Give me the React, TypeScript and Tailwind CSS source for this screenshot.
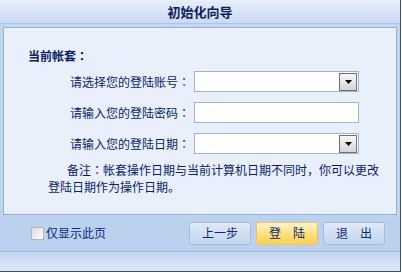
import React from "react";

const font = { fontFamily: '"Noto Sans CJK SC", "Noto Sans", sans-serif' };

function C() {
  return (
    <span
      className="inline-block w-[12px] text-center overflow-hidden align-top"
      style={{ fontFamily: '"Noto Sans CJK TC", sans-serif' }}
    >
      ：
    </span>
  );
}

function DropBtn() {
  return (
    <div className="w-[18px] h-[18px] mr-[1px] border border-[#6f6f6f] bg-gradient-to-b from-[#f7f7f7] to-[#d6d6d6] flex items-center justify-center">
      <svg width="7" height="4" viewBox="0 0 7 4">
        <path d="M0 0 H7 L3.5 4 Z" fill="#000" />
      </svg>
    </div>
  );
}

function Row({ label, select }: { label: string; select?: boolean }) {
  return (
    <div className="flex items-center">
      <div className="w-[162px] text-right text-[12px] leading-[16px] text-[#0a1d6b]">
        {label}
        <C />
      </div>
      <div className="ml-[4px] w-[165px] h-[21px] border border-[#9fb4d4] bg-white flex items-center justify-end">
        {select ? <DropBtn /> : null}
      </div>
    </div>
  );
}

function Btn({ children, primary }: { children: React.ReactNode; primary?: boolean }) {
  return (
    <div
      className={
        "w-[62px] h-[23px] rounded-[2px] border flex items-center justify-center text-[12px] text-[#0c2a7a] " +
        (primary
          ? "border-[#e9c474] bg-gradient-to-b from-[#fff3c8] via-[#ffe083] to-[#ffcf45]"
          : "border-[#a3bde0] bg-gradient-to-b from-[#dfeaf8] to-[#c3d6ee]")
      }
    >
      {children}
    </div>
  );
}

export default function App() {
  return (
    <div className="w-[402px] h-[273px] bg-white [text-spacing-trim:space-all]" style={font}>
      <div className="w-[401px] h-[272px] flex flex-col bg-[#c1d5f0] border-r border-b border-[#3d4f70]">
        <div className="h-[24px] shrink-0 bg-gradient-to-b from-[#e6eefa] to-[#c8daf3] border-b border-[#a9c4ea] flex items-center justify-center">
          <span className="text-[13px] font-bold text-[#0e1f5a] leading-none">初始化向导</span>
        </div>
        <div className="h-[3px] shrink-0 bg-[#c3d7f1]" />
        <div className="mx-[3px] h-[188px] shrink-0 border border-[#92b3e0] bg-[#e9f0fb] pt-[20px] pl-[24px]">
          <div className="text-[12px] font-bold leading-[16px] text-[#0a1d6b]">
            当前帐套<C />
          </div>
          <div className="mt-[7px] flex flex-col gap-[10px]">
            <Row label="请选择您的登陆账号" select />
            <Row label="请输入您的登陆密码" />
            <Row label="请输入您的登陆日期" select />
          </div>
          <div className="mt-[7px] ml-[20px] w-[340px] text-[12px] leading-[17px] text-[#0a1d6b] whitespace-nowrap">
            <div className="pl-[19px]">
              备注<C />帐套操作日期与当前计算机日期不同时，你可以更改
            </div>
            <div>登陆日期作为操作日期。</div>
          </div>
        </div>
        <div className="h-[36px] shrink-0 bg-[#bbd1ed] flex items-center pl-[31px] pr-[15px]">
          <div className="w-[13px] h-[13px] border border-[#b5b5b5] bg-gradient-to-br from-[#d9d9d9] to-[#ffffff]" />
          <span className="ml-[2px] text-[12px] text-[#0c2a7a] leading-none">仅显示此页</span>
          <div className="ml-auto flex gap-[5px]">
            <Btn>上一步</Btn>
            <Btn primary>登　陆</Btn>
            <Btn>退　出</Btn>
          </div>
        </div>
        <div className="flex-1 border-t border-[#9dbbe3] bg-gradient-to-b from-[#c4d7f0] to-[#dde8f7]" />
      </div>
    </div>
  );
}
